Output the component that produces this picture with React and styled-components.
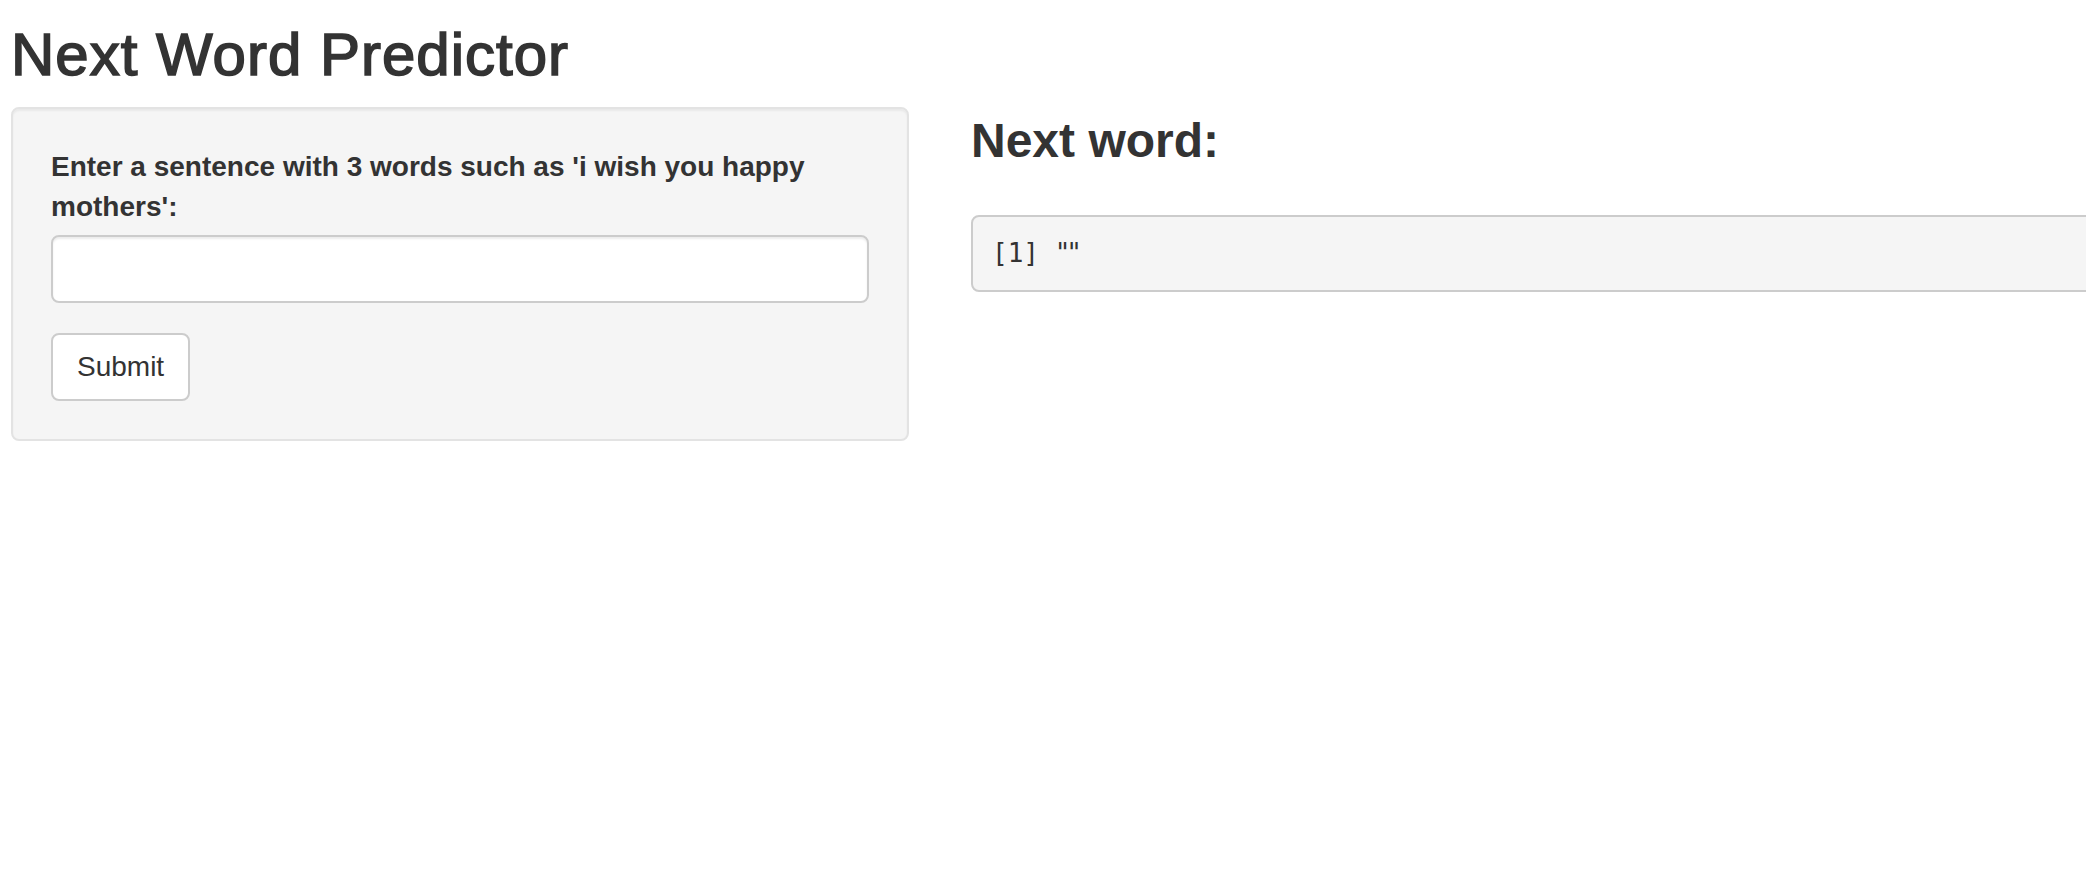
import React from "react"
import styled, { createGlobalStyle } from "styled-components"

const GlobalStyle = createGlobalStyle`
  html, body {
    margin: 0;
    padding: 0;
    overflow: hidden;
    background: #fff;
  }
  body {
    font-family: "Liberation Sans", Arial, sans-serif;
    color: #333;
    font-size: 28px;
    line-height: 1.42857;
  }
  * {
    box-sizing: border-box;
  }
`

const Page = styled.div`
  padding: 0 0 0 11px;
  width: 2086px;
`

const Title = styled.h2`
  margin: 22px 0 19px;
  font-size: 60px;
  font-weight: 500;
  line-height: 1.1;
  letter-spacing: 1px;
  -webkit-text-stroke: 1.6px #333;
`

const Row = styled.div`
  display: flex;
  align-items: flex-start;
  gap: 62px;
`

const Sidebar = styled.div`
  flex: 0 0 898px;
`

const Well = styled.form`
  min-height: 40px;
  padding: 38px;
  margin-bottom: 40px;
  background: #f5f5f5;
  border: 2px solid #e3e3e3;
  border-radius: 8px;
  box-shadow: inset 0 2px 2px rgba(0, 0, 0, 0.05);
`

const FormGroup = styled.div`
  margin-bottom: 30px;
`

const Label = styled.label`
  display: inline-block;
  max-width: 100%;
  margin-bottom: 8px;
  font-weight: bold;
  font-size: 28px;
  line-height: 40px;
`

const TextInput = styled.input`
  display: block;
  width: 100%;
  height: 68px;
  padding: 12px 24px;
  font-family: inherit;
  font-size: 28px;
  color: #555;
  background: #fff;
  border: 2px solid #ccc;
  border-radius: 8px;
  box-shadow: inset 0 2px 2px rgba(0, 0, 0, 0.075);
  outline: none;
`

const Button = styled.button`
  display: inline-block;
  height: 68px;
  padding: 12px 24px;
  font-family: inherit;
  font-size: 28px;
  line-height: 40px;
  color: #333;
  background: #fff;
  border: 2px solid #ccc;
  border-radius: 8px;
  cursor: pointer;
`

const Main = styled.div`
  flex: 0 0 1856px;
`

const Heading = styled.h3`
  margin: 8px 0 47px;
  font-size: 48px;
  font-weight: bold;
  line-height: 1.1;
`

const Output = styled.pre`
  margin: 0;
  padding: 18px 19px;
  font-family: "DejaVu Sans Mono", Menlo, monospace;
  font-size: 26px;
  line-height: 37px;
  color: #333;
  background: #f5f5f5;
  border: 2px solid #ccc;
  border-radius: 8px;
  white-space: pre-wrap;
`

const Quotes = styled.span`
  letter-spacing: -4px;
`

const App = () => {
  return (
    <Page>
      <GlobalStyle />
      <Title>Next Word Predictor</Title>
      <Row>
        <Sidebar>
          <Well onSubmit={e => e.preventDefault()}>
            <FormGroup>
              <Label htmlFor="sentence">
                Enter a sentence with 3 words such as 'i wish you happy mothers':
              </Label>
              <TextInput id="sentence" type="text" />
            </FormGroup>
            <Button type="submit">Submit</Button>
          </Well>
        </Sidebar>
        <Main>
          <Heading>Next word:</Heading>
          <Output>[1] <Quotes>""</Quotes></Output>
        </Main>
      </Row>
    </Page>
  )
}

export default App
